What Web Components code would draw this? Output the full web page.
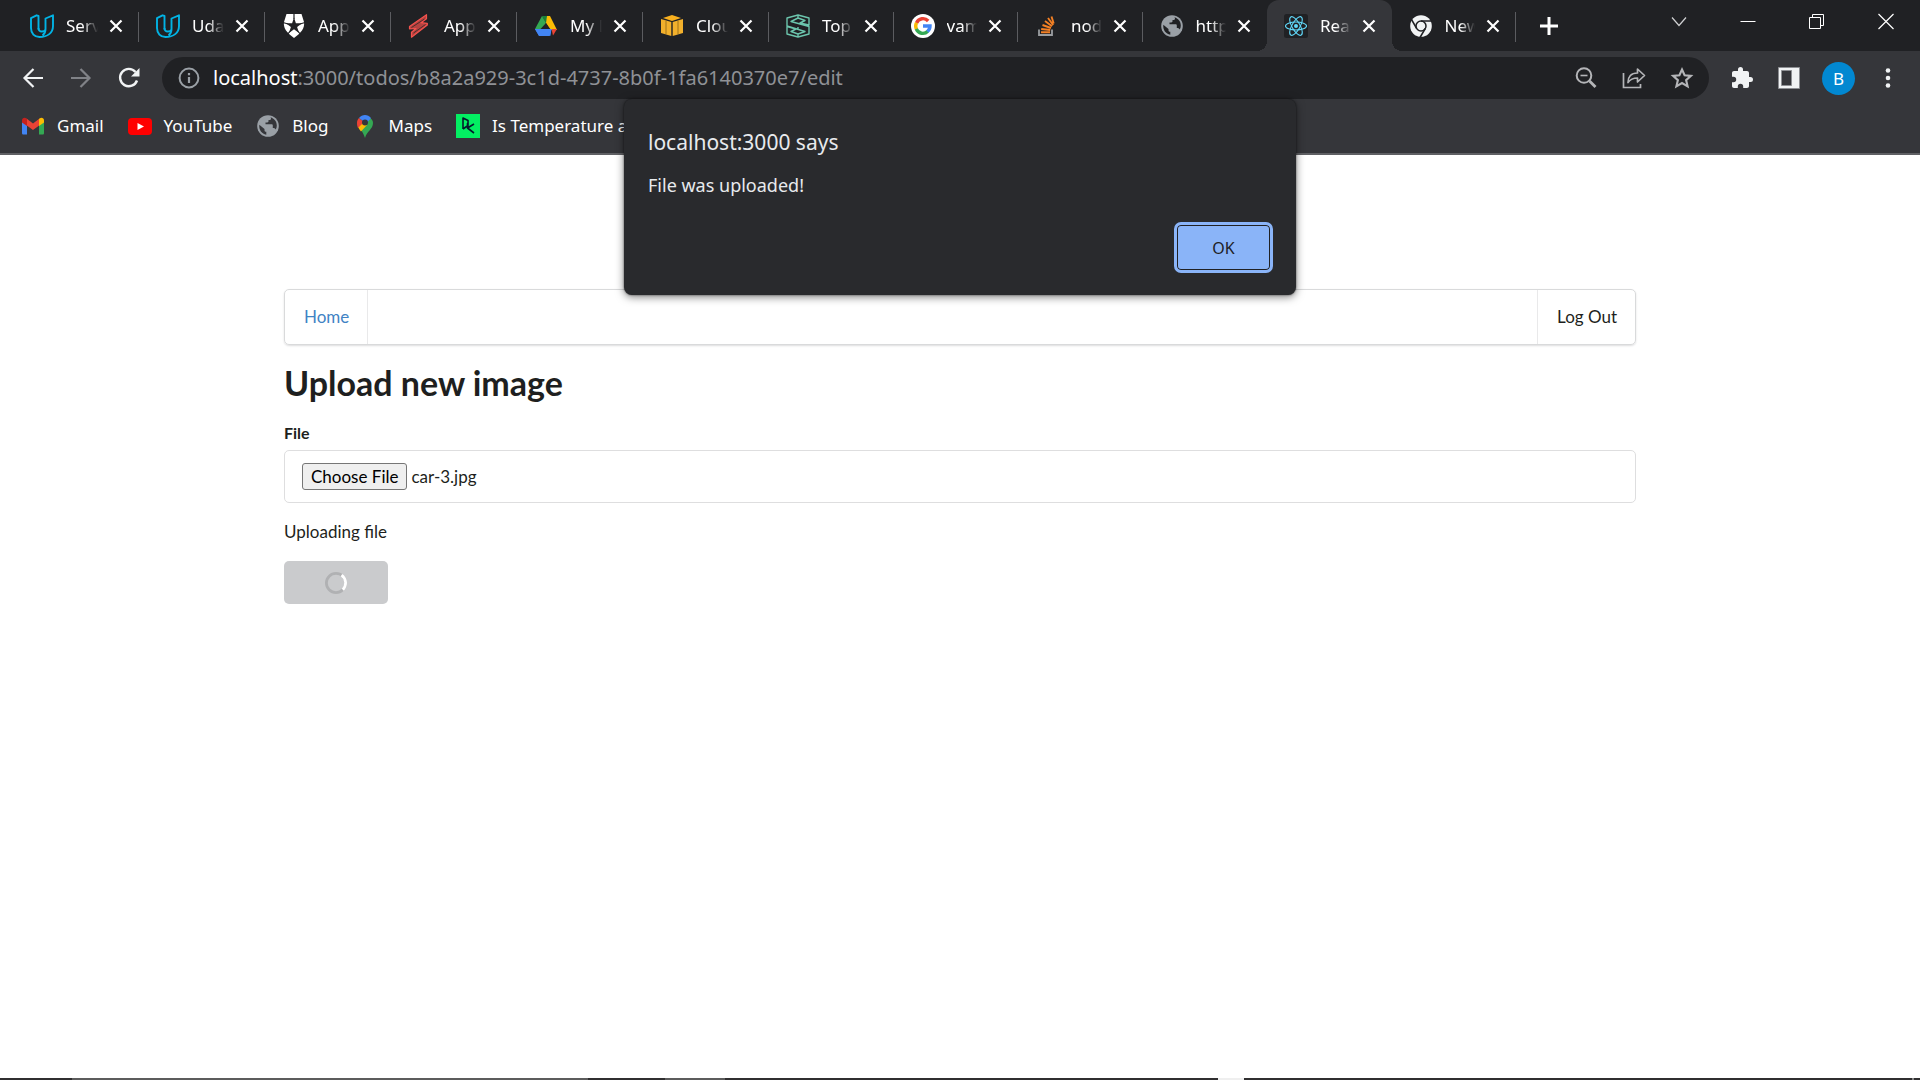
<!DOCTYPE html>
<html lang="en">
<head>
<meta charset="utf-8">
<title>React App</title>
<style>
  html, body { margin: 0; height: 100%; }
  body {
    display: flex; flex-direction: column; overflow: hidden; background: #fff;
    --frame: #202124; --bar: #35363a; --ink: #fff; --muted: #9aa0a6;
    --ui: "Noto Sans", "Open Sans", sans-serif;
    --page: Lato, "Liberation Sans", sans-serif;
    font-family: var(--ui);
  }
</style>
</head>
<body>
<browser-frame>
  <tab-strip slot="tabs">
    <browser-tab icon="udacity">Serverless</browser-tab>
    <browser-tab icon="udacity">Udacity</browser-tab>
    <browser-tab icon="auth0">Applications</browser-tab>
    <browser-tab icon="bolt">Apps</browser-tab>
    <browser-tab icon="drive">My Drive</browser-tab>
    <browser-tab icon="cube">Cloud</browser-tab>
    <browser-tab icon="stack3d">Top</browser-tab>
    <browser-tab icon="google">vamp</browser-tab>
    <browser-tab icon="overflow">node</browser-tab>
    <browser-tab icon="globe" last>https</browser-tab>
    <browser-tab icon="react" active>React App</browser-tab>
    <browser-tab icon="chrome">New Tab</browser-tab>
  </tab-strip>
  <tool-bar slot="toolbar"></tool-bar>
  <bookmark-bar slot="bookmarks">
    <bookmark-item icon="gmail">Gmail</bookmark-item>
    <bookmark-item icon="youtube">YouTube</bookmark-item>
    <bookmark-item icon="globe">Blog</bookmark-item>
    <bookmark-item icon="maps">Maps</bookmark-item>
    <bookmark-item icon="datacamp">Is Temperature a</bookmark-item>
  </bookmark-bar>
  <upload-page></upload-page>
  <alert-box slot="dialog" heading="localhost:3000 says">File was uploaded!</alert-box>
</browser-frame>
<task-edge></task-edge>

<script>
const art = {
  udacity: `<g fill="none" stroke="#02b3e4" stroke-width="1.900" stroke-linejoin="round"><path d="M8.500 15.500V2L6.500 1.300 1 4.200V14c0 5.500 3.500 9 8.500 9 8 0 13.500-4 13.500-11V1.300L15.500 4.500V15c0 3-1 5-3 6.500"/><path d="M8.500 14c0 2.200 1.200 3.500 3.500 3.500 1.600 0 2.800-.6 3.500-1.500"/></g>`,
  auth0: `<path fill="#fff" d="M4.500 0h15l2.500 8c1 6-3 11-10 16C5 19 1 14 2 8z"/><path fill="#202124" d="m12 3.500 1.900 5.700h6.200l-5 3.700 1.900 6-5-3.600-5 3.600 1.900-6-5-3.700h6.200z"/><path stroke="#202124" stroke-width="1.200" d="M12 0v5M1 8.500l5 1.500M23 8.500 18 10M5 21l4-5M19 21l-4-5"/>`,
  bolt: `<path fill="#f4524d" fill-opacity=".7" stroke="#f4524d" stroke-width="1.200" stroke-linejoin="round" d="M18.500.7 1.500 12.500v2.300l6.500-.3-4.500 3.700v5L19.300 11V9.300L13 8.700l5.500-4z"/><path fill="none" stroke="#202124" stroke-width=".7" d="m3.500 13.500 13-8.500M5.500 19l12-8.500"/>`,
  drive: `<path fill="#188038" d="M8 2h8l-4 7z"/><path fill="#fbbc04" d="M16 2h-3l-1 7 5 7h6z"/><path fill="#4285f4" d="M6.500 15h11l-2 7H5l-4-7z"/><path fill="#ea4335" d="M17.500 15H23l-4 6.500z"/><path fill="#4285f4" d="M1 15h16.500l-1 6.800H5z"/><path fill="#34a853" d="M8 2 1 15h5.500L12 9z"/><path fill="#202124" d="M12 9 8.500 15h7z"/>`,
  cube: `<path fill="#f9b01e" d="m12 1 9 3-9 3-9-3z"/><path fill="#f2b02c" d="M1 5 11.300 8v14L1 19zM23 5 12.700 8v14L23 19z"/><path stroke="#8a6418" stroke-width=".8" d="M6 7v13M18 7v13"/>`,
  stack3d: `<g fill="none" stroke="#6cc5ad" stroke-width="1.400" stroke-linejoin="round"><path d="m1 4 11-3 11 3v7l-9-2 5-2.500L12 4 5 7.500l18 5V20l-11 3-11-3v-7.500l9 2.500-5 2.500L12 20l7-2.500L1 12z M12 1v3M12 20v3M12 13v3"/></g>`,
  google: `<circle cx="12" cy="12" r="12" fill="#fff"/><g fill="none" stroke-width="3.400"><path stroke="#ea4335" d="M5.500 9a7 7 0 0 1 11.700-2"/><path stroke="#fbbc05" d="M5.500 15.200a7.200 7.200 0 0 1 0-6.500"/><path stroke="#34a853" d="M16.800 17.300a7 7 0 0 1-11.500-2.400"/><path stroke="#4285f4" d="M12 12h7c0 2-.8 4-2.500 5.500"/></g>`,
  overflow: `<path fill="none" stroke="#9a9da1" stroke-width="1.800" d="M4 15.500V21h13v-5.500"/><g stroke="#f48024" stroke-width="1.900"><path d="M6 18.300h9M6.200 15l9 1M7.500 11l8.500 3M10 7l7 5.300M13 4l5.200 7M16.500 2.500l2.200 7"/></g>`,
  globe: `<circle cx="12" cy="12" r="10.800" fill="#9aa0a6"/><path fill="var(--bg,#202124)" d="M14.500 3.300c3.500 1 6.300 4.200 6.300 8.200 0 1.500-.3 2.800-1 4-.6-.7-1-1.500-2-1.500h-1v-2.500c0-.8-.5-1.200-1.200-1.200H9.500V8.500h1.800c.7 0 1.200-.5 1.200-1.200V6h1c1 0 1.500-.7 1.500-1.500zM3.300 10.800 8.500 15v1.200c0 1 .8 1.600 1.800 1.600v2.900c-4.500-.8-7.500-4.500-7-9.900z"/>`,
  react: `<rect width="24" height="24" rx="2.500" fill="#202124"/><g fill="none" stroke="#61dafb" stroke-width="1.100"><ellipse cx="12" cy="12" rx="10.500" ry="4"/><ellipse cx="12" cy="12" rx="10.500" ry="4" transform="rotate(60 12 12)"/><ellipse cx="12" cy="12" rx="10.500" ry="4" transform="rotate(120 12 12)"/></g><circle cx="12" cy="12" r="2" fill="#61dafb"/>`,
  chrome: `<circle cx="12" cy="12" r="10.800" fill="#f1f3f4"/><g fill="none" stroke="#202124" stroke-width="1.500"><circle cx="12" cy="12" r="5"/><path d="M12 7h10.500M7.700 14.500 2.500 5.500M16.300 14.500 11 23.500"/></g>`,
  gmail: `<path fill="#4285f4" d="M1 7.500 6 11v9.500H2.500C1.500 20.500 1 20 1 19z"/><path fill="#34a853" d="M23 7.500 18 11v9.500h3.500c1 0 1.500-.5 1.500-1.500z"/><path fill="#ea4335" d="M5.500 4.500 12 9.500l6.500-5v6.800L12 16l-6.500-4.700z"/><path fill="#c5221f" d="M1 8.500V6.500C1 4 3.500 3 5.500 4.500L6 5v7z"/><path fill="#fbbc04" d="M23 8.500V6.500C23 4 20.500 3 18.500 4.500L18 5v7z"/>`,
  youtube: `<rect y="4" width="24" height="17" rx="4" fill="#f00"/><path fill="#fff" d="M9.500 9v7l6.500-3.500z"/>`,
  maps: `<path fill="#34a853" d="M20 9c0 6-6 8-8 15-1-3-2-5-4-8l9-12c2 1 3 3 3 5z"/><path fill="#fbbc04" d="m5 13 4-5 5 3-6 6.500C7 16 6 15 5 13z"/><path fill="#ea4335" d="M4 9c0-2 .7-4 2-5l5 4-6 6c-.7-1.500-1-3-1-5z"/><path fill="#4285f4" d="M6 4c3-4 9-4 12 0l-5 6-3-3z"/><circle cx="12" cy="8.500" r="3" fill="#35363a"/>`,
  datacamp: `<rect width="24" height="24" fill="#03ef62"/><path fill="none" stroke="#05192d" stroke-width="1.600" stroke-linejoin="round" d="M7 15V4l5 2.500v5L7 15M18 10l-6.500 4 6.500 5M11.500 14V9"/>`,
  close: `<path stroke="#fff" stroke-width="2.200" d="m2.500 2.500 11 11m0-11-11 11"/>`,
  plus: `<path stroke="#fff" stroke-width="3" d="M12 3v18M3 12h18"/>`,
  chevron: `<path fill="none" stroke="#d0d1d3" stroke-width="1.200" d="m5 7.500 7 8 7-8"/>`,
  minimise: `<path stroke="#fff" stroke-width="1" d="M4.500 11.500h15"/>`,
  restore: `<path fill="none" stroke="#fff" stroke-width="1" d="M4.500 7.500h11v11h-11zM7.500 7V4.500h11v11H16"/>`,
  exit: `<path stroke="#fff" stroke-width="1.200" d="m4.500 4 15 15m0-15-15 15"/>`,
  back: `<path fill="none" stroke="#f1f3f4" stroke-width="2.200" d="M22 12H3m9.500-9L3.500 12l9 9"/>`,
  forward: `<path fill="none" stroke="#808287" stroke-width="2.200" d="M2 12h19m-9.500-9 9 9-9 9"/>`,
  reload: `<path fill="none" stroke="#f1f3f4" stroke-width="2.400" d="M20 14.500A8.700 8.700 0 1 1 18.500 6"/><path fill="#f1f3f4" d="M22.500 2v8.500H14z"/>`,
  info: `<circle cx="12" cy="12" r="9.400" fill="none" stroke="#9aa0a6" stroke-width="2"/><path stroke="#9aa0a6" stroke-width="2.200" d="M12 7v2.300M12 11v6"/>`,
  zoomout: `<g fill="none" stroke="#b4b5b8" stroke-width="2"><circle cx="10" cy="9.500" r="7.300"/><path stroke-width="2.800" d="m15.500 15 6 6"/><path stroke-width="1.600" d="M6.500 9.500h7"/></g>`,
  share: `<g fill="none" stroke="#b4b5b8" stroke-width="1.700"><path d="M1.500 7v14.500h17V18"/><path stroke-linejoin="round" d="M6 16.500c0-6 3-9.500 9.500-9.500V3l7 6.500-7 6.500v-4c-4.500 0-7 1-9.500 4.500z"/></g>`,
  star: `<path fill="none" stroke="#b4b5b8" stroke-width="2.100" d="m12 3.500 2.600 5.800 6.300.6-4.800 4.200 1.500 6.200-5.600-3.300-5.600 3.300 1.500-6.200-4.800-4.200 6.300-.6z"/>`,
  puzzle: `<path fill="#f1f3f4" d="M20.500 11H19V7c0-1.100-.9-2-2-2h-4V3.500a2.500 2.500 0 0 0-5 0V5H4c-1.100 0-2 .9-2 2v3.800h1.500a2.700 2.700 0 0 1 0 5.400H2V20c0 1.100.9 2 2 2h3.800v-1.500a2.700 2.700 0 0 1 5.400 0V22H17c1.100 0 2-.9 2-2v-4h1.500a2.500 2.500 0 0 0 0-5z"/>`,
  panel: `<path fill="#f1f3f4" stroke="#8d8f93" stroke-width="1" d="M1.500 1.500h21v21h-21z"/><path fill="#35363a" stroke="#8d8f93" d="M4.500 4.500h10v15h-10z"/>`,
  dots: `<g fill="#f1f3f4"><circle cx="12" cy="4.500" r="2.300"/><circle cx="12" cy="12" r="2.300"/><circle cx="12" cy="19.500" r="2.300"/></g>`
};

const reset = `*{box-sizing:border-box} button{border:0;padding:0;margin:0;background:none;font:inherit;color:inherit;cursor:pointer}`;

function define(name, render, after) {
  customElements.define(name, class extends HTMLElement {
    constructor() { super(); this.attachShadow({ mode: 'open' }); }
    connectedCallback() {
      const t = document.createElement('template');
      t.innerHTML = render(this);
      this.shadowRoot.replaceChildren(t.content.cloneNode(true));
      if (after) after(this.shadowRoot, this);
    }
  });
}

define('svg-icon', el => {
  const n = el.getAttribute('name');
  return `<style>:host{display:block;flex:none;width:24px;height:24px} svg{display:block;width:100%;height:100%}</style>
  <svg viewBox="0 0 ${n === 'close' ? '16 16' : '24 24'}" aria-hidden="true">${art[n]}</svg>`;
});

define('browser-frame', () => `<style>
  :host{display:flex;flex-direction:column;flex:1;min-height:0}
  header{background:var(--bar);border-bottom:2px solid #5f6064;color:var(--ink)}
  main{flex:1;min-height:0}
  .anchor{position:relative}
  ::slotted([slot=dialog]){position:absolute;top:-56px;left:0;right:0;margin:0 auto;z-index:2}
</style>
<header><slot name="tabs"></slot><slot name="toolbar"></slot><slot name="bookmarks"></slot></header>
<div class="anchor"><slot name="dialog"></slot></div>
<main><slot></slot></main>`);

define('tab-strip', () => `<style>${reset}
  :host{display:flex;height:51px;background:var(--frame);padding-left:13px;align-items:stretch}
  .tabs{display:grid;grid-template-columns:repeat(6,126px) repeat(6,1fr);width:1503px}
  .new{width:24px;margin-left:21px}
  .window{display:flex;margin-left:auto;padding-right:22px;gap:45px;height:43px}
</style>
<div class="tabs" role="tablist"><slot></slot></div>
<button class="new" aria-label="New tab"><svg-icon name="plus"></svg-icon></button>
<div class="window">
  <button aria-label="Search tabs"><svg-icon name="chevron"></svg-icon></button>
  <button aria-label="Minimise"><svg-icon name="minimise"></svg-icon></button>
  <button aria-label="Restore"><svg-icon name="restore"></svg-icon></button>
  <button aria-label="Close window"><svg-icon name="exit"></svg-icon></button>
</div>`);

define('browser-tab', el => `<style>${reset}
  :host{display:flex;align-items:center;position:relative;min-width:0;padding:0 15px 0 17px;font-size:17px;line-height:24px}
  :host::after{content:"";position:absolute;right:0;top:12px;width:1px;height:30px;background:#5b5c60}
  :host([last])::after,:host([active])::after{display:none}
  :host([active]){background:var(--bar);border-radius:12px 12px 0 0}
  :host([active])::before{content:"";position:absolute;bottom:0;left:-10px;right:-10px;height:10px;
    background:radial-gradient(circle at 0 0,transparent 10px,var(--bar) 10px) left/10px 10px no-repeat,
      radial-gradient(circle at 100% 0,transparent 10px,var(--bar) 10px) right/10px 10px no-repeat}
  .title{flex:1;min-width:0;overflow:hidden;white-space:nowrap;margin:0 10px 0 12px;text-align:left;
    -webkit-mask-image:linear-gradient(90deg,#000 50%,transparent);mask-image:linear-gradient(90deg,#000 50%,transparent)}
  .x{width:16px;height:16px} .x svg-icon{width:16px;height:16px}
</style>
<svg-icon name="${el.getAttribute('icon')}"></svg-icon>
<button class="title" role="tab" aria-selected="${el.hasAttribute('active')}"><slot></slot></button>
<button class="x" aria-label="Close tab"><svg-icon name="close"></svg-icon></button>`);

define('tool-bar', () => `<style>${reset}
  :host{display:flex;align-items:center;height:54px;padding:0 21px}
  .nav{display:flex;gap:24px;margin-right:21px}
  .omni{flex:1;display:flex;align-items:center;height:42px;border-radius:21px;background:var(--frame);padding:0 15px;gap:24px}
  .omni .url{flex:1;display:flex;align-items:center;font-size:20px;line-height:28px;color:#8f9196;white-space:nowrap;margin-left:-12px}
  .url b{font-weight:400;color:#fff}
  .actions{display:flex;align-items:center;gap:23px;margin-left:21px}
  .avatar{width:33px;height:33px;border-radius:50%;background:#0288d1;color:#fff;font-size:17px;line-height:33px;margin:0 -2px}
</style>
<div class="nav">
  <button aria-label="Back"><svg-icon name="back"></svg-icon></button>
  <button aria-label="Forward"><svg-icon name="forward"></svg-icon></button>
  <button aria-label="Reload"><svg-icon name="reload"></svg-icon></button>
</div>
<div class="omni">
  <button aria-label="Site information"><svg-icon name="info"></svg-icon></button>
  <div class="url"><b>localhost</b><span>:3000/todos/b8a2a929-3c1d-4737-8b0f-1fa6140370e7/edit</span></div>
  <button aria-label="Zoom out"><svg-icon name="zoomout"></svg-icon></button>
  <button aria-label="Share"><svg-icon name="share"></svg-icon></button>
  <button aria-label="Bookmark"><svg-icon name="star"></svg-icon></button>
</div>
<div class="actions">
  <button aria-label="Extensions"><svg-icon name="puzzle"></svg-icon></button>
  <button aria-label="Side panel"><svg-icon name="panel"></svg-icon></button>
  <button class="avatar" aria-label="Profile">B</button>
  <button aria-label="Menu"><svg-icon name="dots"></svg-icon></button>
</div>`.replace('padding:0 21px', 'padding:0 20px 0 21px'));

define('bookmark-bar', () => `<style>:host{display:flex;align-items:center;height:42px;padding:0 21px 6px;gap:24px;overflow:hidden;--bg:var(--bar)}</style><slot></slot>`);

define('bookmark-item', el => `<style>${reset}
  :host{display:block;flex:none;font-size:17px;line-height:24px}
  a{display:flex;align-items:center;gap:12px;color:inherit;text-decoration:none;white-space:nowrap}
</style><a href="#"><svg-icon name="${el.getAttribute('icon')}"></svg-icon><span><slot></slot></span></a>`);

define('alert-box', el => `<style>${reset}
  :host{display:block;width:672px}
  dialog{position:static;display:block;width:100%;margin:0;border:0;padding:27px 23px 22px 24px;border-radius:8px;
    background:#292a2d;color:#e8eaed;box-shadow:0 2px 8px rgba(0,0,0,.5),0 0 2px rgba(0,0,0,.6)}
  h2{margin:0 0 13px;font-size:21px;line-height:32px;font-weight:400}
  p{margin:0;font-size:18px;line-height:28px}
  footer{display:flex;justify-content:flex-end;margin-top:23px}
  button{width:99px;height:51px;border-radius:7px;border:3px solid #8ab4f8;background:#8ab4f8;color:#202124;
    font-size:16px;box-shadow:inset 0 0 0 1px #202124}
</style>
<dialog open aria-labelledby="t"><h2 id="t">${el.getAttribute('heading')}</h2><p><slot></slot></p>
<footer><button>OK</button></footer></dialog>`);

define('nav-menu', () => `<style>${reset}
  :host{display:block}
  nav{display:flex;justify-content:space-between;height:56px;border:1px solid #d9dadb;border-radius:5px;box-shadow:0 1px 2px rgba(34,36,38,.15)}
  a{display:flex;align-items:center;padding:0 18px 0 19px;text-decoration:none;color:#1e1f20}
  .home{color:#4183c4;border-right:1px solid #e9e9ea}
  .out{border-left:1px solid #e9e9ea}
</style><nav><a class="home" href="#">Home</a><a class="out" href="#">Log Out</a></nav>`);

define('load-button', () => `<style>${reset}
  :host{display:block}
  button{display:flex;align-items:center;justify-content:center;width:104px;height:43px;border-radius:5px;background:#cacbcd}
  svg{width:22px;height:22px}
</style><button type="submit" disabled aria-label="Upload"><svg viewBox="0 0 22 22" fill="none" stroke-width="2.800">
<circle cx="11" cy="11" r="9.600" stroke="#b0b1b3"/><path stroke="#fff" d="M16.500 3.100a9.600 9.600 0 0 1 1.300 14.600"/></svg></button>`);

define('upload-page', () => `<style>${reset}
  :host{display:block;font-family:var(--page);font-size:17px;line-height:24px;color:#1e1f20;padding:134px 24px 0}
  .wrap{max-width:1352px;margin:0 auto}
  h1{margin:16px 0 18px;font-size:34px;line-height:44px;font-weight:700}
  label{display:block;font-size:16px;line-height:20px;font-weight:700;margin-bottom:7px}
  input{display:block;width:100%;height:53px;border:1px solid #dededf;border-radius:5px;padding:12px 17px;font:inherit;color:inherit}
  input::file-selector-button{font:inherit;line-height:21px;height:27px;padding:1px 8px;margin:0 4px 0 0;border:1px solid #767676;border-radius:3px;background:#efefef;color:#000}
  p{margin:17px 0}
</style>
<div class="wrap">
  <nav-menu></nav-menu>
  <h1>Upload new image</h1>
  <form>
    <label for="file">File</label>
    <input id="file" type="file" accept="image/*">
    <p>Uploading file</p>
    <load-button></load-button>
  </form>
</div>`, root => {
  const picked = new DataTransfer();
  picked.items.add(new File(['0'], 'car-3.jpg', { type: 'image/jpeg' }));
  root.getElementById('file').files = picked.files;
});

define('task-edge', () => `<style>:host{display:block;flex:none;height:2px;background:linear-gradient(90deg,
  #302f30 0 72px,#5c5c5c 72px 588px,#302f30 588px 665px,#5c5c5c 665px 725px,#302f30 725px 1218px,#efefef 1218px 1244px,#302f30 1244px 1912px,#888 1912px 1914px,#302f30 1914px)}</style>`);
</script>
</body>
</html>
